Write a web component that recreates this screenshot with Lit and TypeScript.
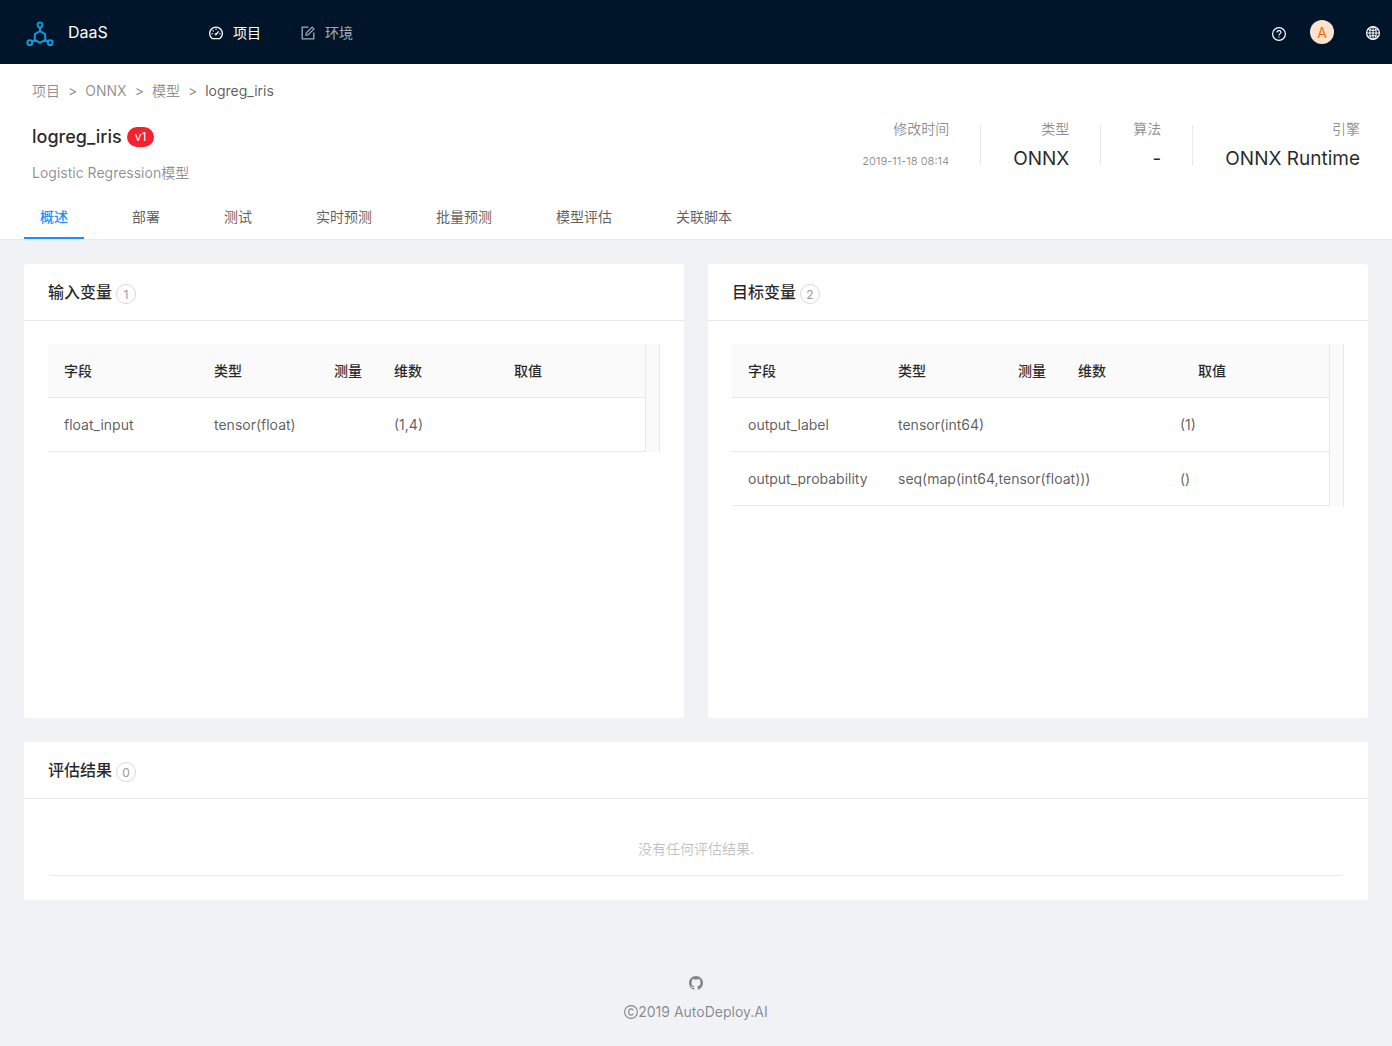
import { LitElement, html, css, svg, TemplateResult } from "lit";
import { customElement, property } from "lit/decorators.js";
import { classMap } from "lit/directives/class-map.js";

interface Field {
  name: string;
  type: string;
  measure: string;
  dimension: string;
  value: string;
}

const inputs: Field[] = [
  { name: "float_input", type: "tensor(float)", measure: "", dimension: "(1,4)", value: "" },
];

const targets: Field[] = [
  { name: "output_label", type: "tensor(int64)", measure: "", dimension: "(1)", value: "" },
  { name: "output_probability", type: "seq(map(int64,tensor(float)))", measure: "", dimension: "()", value: "" },
];

const tabs = ["概述", "部署", "测试", "实时预测", "批量预测", "模型评估", "关联脚本"];

const shapes: Record<string, TemplateResult> = {
  dashboard: svg`<path d="M3.2 12.6A6.35 6.35 0 1 1 10.8 12.6Z" stroke-width="1.3"/>
    <path d="M7 8.200 9.800 5.400" stroke-width="1.300"/><circle cx="6.800" cy="8.300" r=".8" stroke-width="1"/>
    <path d="M7 2.600v1.500M3.700 4.300l1 1M2.400 7.700h1.500M10.100 7.700h1.500" stroke-width="1.100"/>`,
  form: svg`<path d="M7.400 1.200H1.200v11.600h11.600V6.600" stroke-width="1.300"/>
    <path d="M4.900 9.200 5.200 7.100 11.200 1.100 13 2.900 7 8.900Z" stroke-width="1.100"/>`,
  question: svg`<circle cx="7" cy="7" r="6.400" stroke-width="1.200"/>
    <path d="M5 5.500C5 4.300 5.900 3.600 7 3.600S9 4.300 9 5.400C9 6.700 7 6.700 7 8.400" stroke-width="1.100"/>
    <circle cx="7" cy="10.100" r=".65" fill="currentColor" stroke="none"/>`,
  global: svg`<circle cx="7" cy="7" r="6.400" stroke-width="1.200"/>
    <ellipse cx="7" cy="7" rx="3.200" ry="6.400" stroke-width="1"/>
    <path d="M7 .6v12.800M.6 7h12.800M1.800 3.600c3.200 1 7.200 1 10.400 0M1.800 10.400c3.200-1 7.200-1 10.400 0" stroke-width="1"/>`,
  copyright: svg`<circle cx="7" cy="7" r="6.400" stroke-width="1.100"/>
    <path d="M9.200 5.400C8.900 4.400 8.100 3.900 7.100 3.900 5.600 3.900 4.700 5 4.700 7S5.600 10.100 7.100 10.100C8.100 10.100 8.900 9.600 9.200 8.600" stroke-width="1.100"/>`,
};

@customElement("line-icon")
class LineIcon extends LitElement {
  @property() name = "";
  static styles = css`
    :host { display: inline-flex; }
    svg { width: 14px; height: 14px; fill: none; stroke: currentColor; }
  `;
  render() {
    return html`<svg viewBox="0 0 14 14" aria-hidden="true">${shapes[this.name]}</svg>`;
  }
}

@customElement("field-table")
class FieldTable extends LitElement {
  @property({ attribute: false }) fields: Field[] = [];
  @property({ type: Boolean }) wide = false;

  static styles = css`
    :host { display: flex; border-right: 1px solid #e8e8e8; background: #fafafa; padding-right: 13px; }
    .grid { display: block; flex: 1; min-width: 0; border-right: 1px solid #e8e8e8; background: #fff; }
    thead, tbody { display: block; }
    .row { display: grid; grid-template-columns: 150px 120px 60px 120px 1fr; border-bottom: 1px solid #e8e8e8; }
    .wide tbody .row { grid-template-columns: 150px 221px 61px 120px 1fr; }
    .head { background: #fafafa; color: rgba(0, 0, 0, 0.85); }
    th, td { padding: 16px; line-height: 21px; text-align: left; white-space: nowrap; min-width: 0; }
    th { font-weight: 500; }
    td { line-height: 22px; padding-bottom: 15px; }
  `;

  render() {
    return html`<table class=${classMap({ grid: true, wide: this.wide })}>
      <thead><tr class="row head">
        ${["字段", "类型", "测量", "维数", "取值"].map((t) => html`<th scope="col">${t}</th>`)}
      </tr></thead>
      <tbody>
        ${this.fields.map((f) => html`<tr class="row">
          <td>${f.name}</td><td>${f.type}</td><td>${f.measure}</td><td>${f.dimension}</td><td>${f.value}</td>
        </tr>`)}
      </tbody>
    </table>`;
  }
}

@customElement("app-root")
class AppRoot extends LitElement {
  static styles = css`
    :host {
      display: flex;
      flex-direction: column;
      min-height: 100vh;
      background: #f0f2f5;
      color: rgba(0, 0, 0, 0.65);
      font: 14px/22px Inter, "Noto Sans CJK SC", sans-serif;
    }
    * { box-sizing: border-box; }
    a { color: inherit; text-decoration: none; }
    h1, h2, p, dl, dd, dt, ol { margin: 0; padding: 0; }
    button { font: inherit; color: inherit; background: none; border: 0; padding: 0; cursor: pointer; }

    .top { display: flex; align-items: center; height: 64px; background: #001529; color: #fff; padding: 0 12px 0 26px; }
    .brand { display: flex; align-items: center; gap: 14px; width: 163px; font-size: 16px; }
    .logo { width: 28px; height: 28px; margin-top: 4px; fill: none; stroke: #1296db; stroke-width: 2; }
    .menu { display: flex; flex: 1; padding-top: 2px; }
    .menu a { display: flex; align-items: center; gap: 10px; padding: 0 20px; color: rgba(255, 255, 255, 0.65); }
    .menu .on { color: #fff; }
    .tools { display: flex; align-items: center; }
    .tools button { display: flex; padding-top: 2px; }
    .tools .help { padding-top: 4px; }
    .avatar { width: 24px; height: 24px; margin: 0 32px 0 24px; border-radius: 50%; background: #fde3cf; color: #ff6a00; text-align: center; line-height: 26px; }

    .intro { background: #fff; border-bottom: 1px solid #e8e8e8; padding: 16px 24px 0; }
    .crumbs { display: flex; gap: 8px; padding: 0 8px; list-style: none; color: rgba(0, 0, 0, 0.45); }
    .crumbs li { display: flex; gap: 8px; }
    .crumbs li + li::before { content: ">"; }
    .crumbs .here { color: rgba(0, 0, 0, 0.65); }
    .about { display: flex; justify-content: space-between; padding: 16px 8px 0; }
    .title { display: flex; align-items: center; gap: 5px; height: 38px; }
    .title h1 { font-size: 18px; font-weight: 500; color: rgba(0, 0, 0, 0.85); }
    .version { padding: 0 8px; border-radius: 10px; background: #f5222d; color: #fff; font-size: 12px; line-height: 20px; }
    .desc { padding-top: 6px; color: rgba(0, 0, 0, 0.45); }
    .stats { display: flex; gap: 32px; text-align: right; }
    .stats dt { color: rgba(0, 0, 0, 0.45); }
    .stats dd { font-size: 19px; line-height: 38px; color: rgba(0, 0, 0, 0.85); }
    .stats .date { font-size: 11px; line-height: 42px; color: rgba(0, 0, 0, 0.45); }
    .rule { width: 1px; height: 40px; margin: 7px 0 0 -1px; background: #e8e8e8; }
    .tabs { display: flex; gap: 32px; padding-top: 12px; }
    .tab { height: 43px; padding: 0 16px; border-bottom: 2px solid transparent; }
    .tabs .active { color: #1890ff; font-weight: 500; border-color: #1890ff; }

    .body { display: grid; grid-template-columns: 1fr 1fr; gap: 24px; padding: 24px; }
    .card { background: #fff; border-radius: 2px; min-width: 0; }
    .tall { min-height: 454px; }
    .full { grid-column: 1 / -1; }
    .caption { display: flex; align-items: center; gap: 4px; height: 57px; padding: 0 24px; border-bottom: 1px solid #e8e8e8; }
    .caption h2 { font-size: 16px; font-weight: 500; color: rgba(0, 0, 0, 0.85); }
    .count { width: 20px; height: 20px; margin-top: 3px; border: 1px solid #d9d9d9; border-radius: 10px; color: #999; font-size: 12px; line-height: 19px; text-align: center; }
    .inner { padding: 24px; }
    .tall .inner { padding-top: 23px; }
    .empty { border-bottom: 1px solid #e8e8e8; border-radius: 4px; padding: 15px 16px; text-align: center; line-height: 22px; color: rgba(0, 0, 0, 0.25); }
    .foot { display: flex; flex-direction: column; align-items: center; gap: 11px; padding: 52px 24px 23px; color: rgba(0, 0, 0, 0.45); }
    .github { display: flex; }
    .github svg { width: 14px; height: 14px; fill: currentColor; }
    .legal { display: flex; align-items: center; }
  `;

  card(title: string, count: number, content: TemplateResult, kind: string) {
    return html`<section class="card ${kind}">
      <header class="caption"><h2>${title}</h2><span class="count">${count}</span></header>
      <div class="inner">${content}</div>
    </section>`;
  }

  render() {
    return html`
      <header class="top">
        <a class="brand" href="#">
          <svg class="logo" viewBox="0 0 28 28" aria-hidden="true">
            <circle cx="14" cy="5" r="2.400"/><circle cx="3.800" cy="22.700" r="2.400"/><circle cx="24.200" cy="22.700" r="2.400"/>
            <path d="M14 11.200 19.200 14.100V19.900L14 22.800 8.800 19.900V14.100ZM14 7.500v3.700M8.800 19.900 6 21.500M19.200 19.900 22 21.500"/>
          </svg>
          <span>DaaS</span>
        </a>
        <nav class="menu">
          <a class="on" href="#"><line-icon name="dashboard"></line-icon><span>项目</span></a>
          <a href="#"><line-icon name="form"></line-icon><span>环境</span></a>
        </nav>
        <div class="tools">
          <button class="help" aria-label="帮助"><line-icon name="question"></line-icon></button>
          <span class="avatar">A</span>
          <button aria-label="语言"><line-icon name="global"></line-icon></button>
        </div>
      </header>

      <div class="intro">
        <ol class="crumbs">
          <li><a href="#">项目</a></li>
          <li><a href="#">ONNX</a></li>
          <li><a href="#">模型</a></li>
          <li><span class="here">logreg_iris</span></li>
        </ol>
        <div class="about">
          <div>
            <div class="title"><h1>logreg_iris</h1><span class="version">v1</span></div>
            <p class="desc">Logistic Regression模型</p>
          </div>
          <dl class="stats">
            <div class="stat"><dt>修改时间</dt><dd class="date">2019-11-18 08:14</dd></div>
            <div class="rule"></div>
            <div class="stat"><dt>类型</dt><dd>ONNX</dd></div>
            <div class="rule"></div>
            <div class="stat"><dt>算法</dt><dd>-</dd></div>
            <div class="rule"></div>
            <div class="stat"><dt>引擎</dt><dd>ONNX Runtime</dd></div>
          </dl>
        </div>
        <nav class="tabs" role="tablist">
          ${tabs.map((t, i) => html`<button role="tab" aria-selected=${i === 0 ? "true" : "false"}
            class=${classMap({ tab: true, active: i === 0 })}>${t}</button>`)}
        </nav>
      </div>

      <main class="body">
        ${this.card("输入变量", 1, html`<field-table .fields=${inputs}></field-table>`, "tall")}
        ${this.card("目标变量", 2, html`<field-table wide .fields=${targets}></field-table>`, "tall")}
        ${this.card("评估结果", 0, html`<p class="empty">没有任何评估结果.</p>`, "full")}
      </main>

      <footer class="foot">
        <a class="github" href="#" aria-label="GitHub">
          <svg viewBox="0 0 16 16"><path d="M8 0C3.580 0 0 3.580 0 8c0 3.540 2.290 6.530 5.470 7.590.4.070.55-.17.55-.38 0-.19-.01-.82-.01-1.490-2.010.37-2.530-.49-2.690-.94-.09-.23-.48-.94-.82-1.130-.28-.15-.68-.52-.01-.53.63-.01 1.080.58 1.230.82.72 1.210 1.870.87 2.330.66.07-.52.28-.87.51-1.070-1.780-.2-3.640-.89-3.640-3.950 0-.87.31-1.590.82-2.150-.08-.2-.36-1.020.08-2.120 0 0 .67-.21 2.200.82.64-.18 1.320-.27 2-.27.68 0 1.360.09 2 .27 1.530-1.040 2.200-.82 2.200-.82.44 1.100.16 1.920.08 2.120.51.56.82 1.270.82 2.150 0 3.070-1.870 3.750-3.650 3.950.29.25.54.73.54 1.480 0 1.070-.01 1.930-.01 2.200 0 .21.15.46.55.38A8.013 8.013 0 0 0 16 8c0-4.420-3.580-8-8-8z"/></svg>
        </a>
        <div class="legal"><line-icon name="copyright"></line-icon><span>2019 AutoDeploy.AI</span></div>
      </footer>
    `;
  }
}
